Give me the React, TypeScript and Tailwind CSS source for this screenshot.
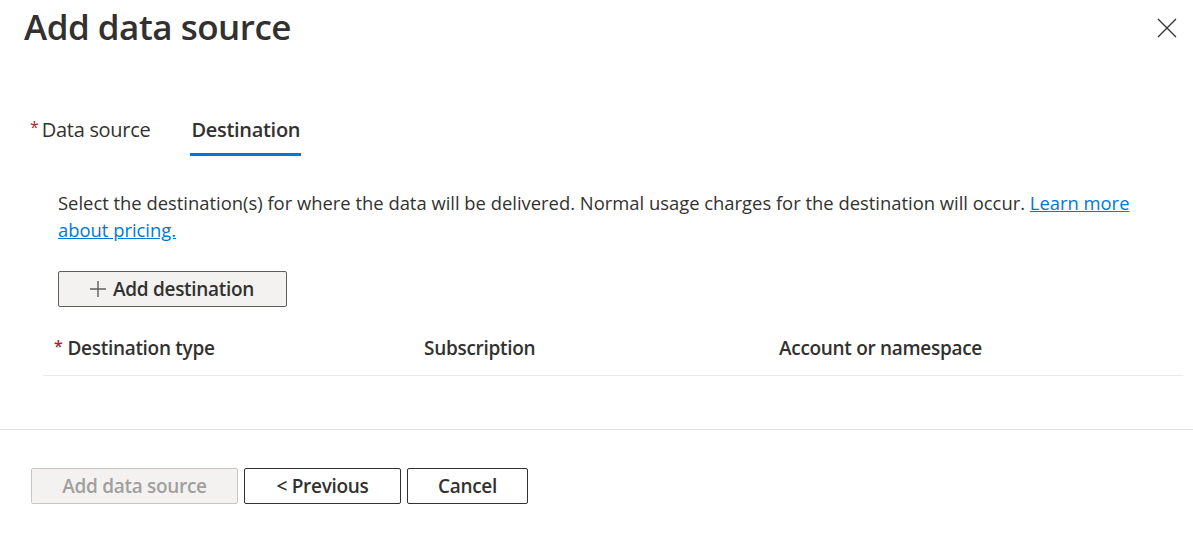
import React from 'react';

const font = { fontFamily: '"Open Sans", "Noto Sans", sans-serif' };

function CloseIcon() {
  return (
    <svg width="20" height="20" viewBox="0 0 20 20" fill="none" stroke="#323130" strokeWidth="1.3">
      <path d="M1 1 L19 19 M19 1 L1 19" />
    </svg>
  );
}

function PlusIcon() {
  return (
    <svg width="18" height="18" viewBox="0 0 18 18" fill="none" stroke="#605e5c" strokeWidth="1.4">
      <path d="M9 1 V17 M1 9 H17" />
    </svg>
  );
}

export default function App() {
  return (
    <div className="w-[1193px] h-[535px] bg-white text-[#323130] overflow-hidden" style={font}>
      <div className="flex items-start justify-between pl-[24px] pr-[16px] pt-[2px]">
        <h1 className="text-[35px] leading-[50px] font-semibold tracking-[-0.5px]">Add data source</h1>
        <button className="mt-[16px] mr-[0px]">
          <CloseIcon />
        </button>
      </div>

      <div className="flex items-start pl-[30px] mt-[65px] gap-[40px] text-[20px]">
        <div className="flex pb-[10px] pt-[0px] leading-[26px]">
          <span className="text-[#a4262c] text-[16px] mr-[3px] leading-[20px]">*</span>
          <span className="tracking-[-0.3px]">Data source</span>
        </div>
        <div className="flex flex-col">
          <span className="font-semibold leading-[26px] tracking-[-0.3px] px-[1px]">Destination</span>
          <div className="h-[3px] bg-[#0078d4] mt-[10px]" />
        </div>
      </div>

      <div className="pl-[58px] pr-[50px] mt-[33px] text-[18.4px] leading-[27px]">
        Select the destination(s) for where the data will be delivered. Normal usage charges for the destination will occur.{' '}
        <a href="#" className="text-[#0078d4] underline">Learn more</a>{' '}
        <a href="#" className="text-[#0078d4] underline">about pricing.</a>
      </div>

      <div className="pl-[58px] mt-[28px]">
        <button className="flex items-center gap-[6px] w-[229px] h-[36px] pl-[30px] bg-[#f3f2f1] border border-[#605e5c] rounded-[2px] text-[19px] font-semibold tracking-[-0.3px]">
          <PlusIcon />
          <span>Add destination</span>
        </button>
      </div>

      <div className="mx-[43px] w-[1140px] mt-[15px] border-b border-[#edebe9]">
        <div className="flex items-center h-[53px] text-[19px] font-semibold tracking-[-0.3px]">
          <div className="w-[369px] pl-[11px] flex">
            <span className="text-[#a4262c] text-[16px] mr-[5px]">*</span>
            <span>Destination type</span>
          </div>
          <div className="w-[355px] pl-[12px]">Subscription</div>
          <div className="pl-[12px]">Account or namespace</div>
        </div>
      </div>

      <div className="mt-[53px] border-t border-[#e1dfdd]" />

      <div className="flex gap-[6px] pl-[31px] mt-[38px] text-[19px] font-semibold tracking-[-0.3px]">
        <button className="w-[207px] h-[36px] bg-[#f3f2f1] border border-[#c8c6c4] rounded-[2px] text-[#a19f9d]">
          Add data source
        </button>
        <button className="w-[157px] h-[36px] bg-white border border-[#323130] rounded-[2px]">
          &lt; Previous
        </button>
        <button className="w-[121px] h-[36px] bg-white border border-[#323130] rounded-[2px]">
          Cancel
        </button>
      </div>
    </div>
  );
}
